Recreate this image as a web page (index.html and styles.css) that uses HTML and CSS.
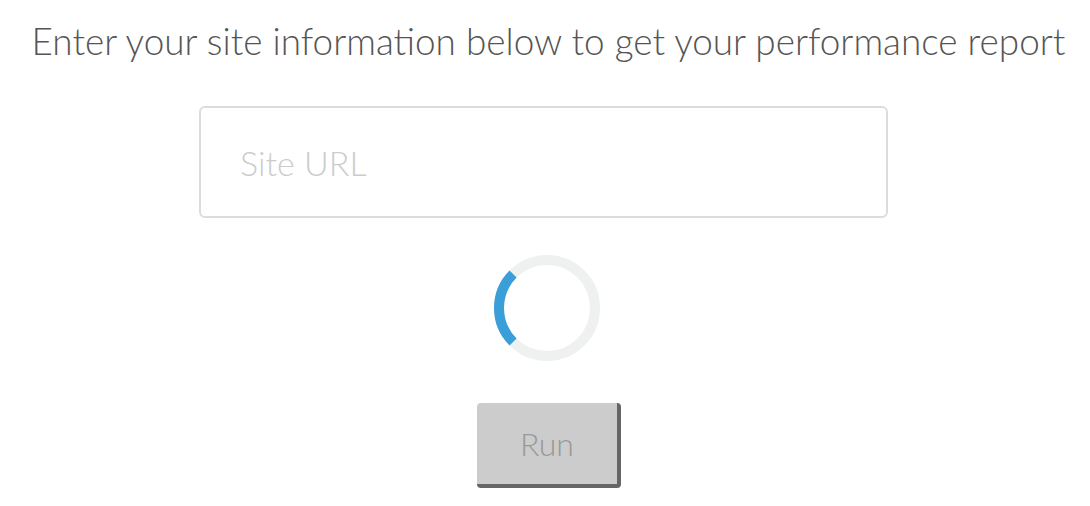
FILE: index.html
```html
<!DOCTYPE html>
<html>
<head>
<meta charset="utf-8">
<link rel="stylesheet" href="styles.css">
</head>
<body>
<main class="page">
  <h1 class="title">Enter your site information below to get your performance report</h1>
  <div class="field">
    <input class="url-input" type="text" placeholder="Site URL">
  </div>
  <div class="spinner">
    <svg width="108" height="108" viewBox="0 0 108 108">
      <circle cx="54" cy="54" r="48" fill="none" stroke="#eff0f0" stroke-width="10"/>
      <path d="M20.06 20.06 A48 48 0 0 0 20.06 87.94" fill="none" stroke="#3a9fd8" stroke-width="10"/>
    </svg>
  </div>
  <button class="run" type="button">Run</button>
</main>
</body>
</html>
```
FILE: styles.css
```css
html, body {
  margin: 0;
  padding: 0;
  background: #ffffff;
}
.page {
  width: 1090px;
  height: 506px;
  display: flex;
  flex-direction: column;
  align-items: center;
  font-family: Lato, "Open Sans", sans-serif;
}
.title {
  margin: 18px 0 0 0;
  padding-left: 7px;
  font-weight: 300;
  font-size: 36.9px;
  line-height: 46px;
  color: #555555;
  white-space: nowrap;
}
.field {
  margin-top: 42px;
  margin-right: 3px;
}
.url-input {
  box-sizing: border-box;
  width: 689px;
  height: 112px;
  border: 2px solid #dcdcdc;
  border-radius: 6px;
  padding: 0 0 0 39px;
  font-family: Lato, "Open Sans", sans-serif;
  font-weight: 300;
  font-size: 34px;
  color: #555;
  outline: none;
  background: #fff;
}
.url-input::placeholder {
  color: #cccccc;
}
.spinner {
  margin-top: 36px;
  margin-left: 4px;
  width: 108px;
  height: 108px;
}
.spinner svg {
  display: block;
}
.run {
  margin-top: 41px;
  margin-left: 8px;
  box-sizing: border-box;
  width: 144px;
  height: 85px;
  background: #cccccc;
  border: none;
  border-right: 4px solid #666666;
  border-bottom: 4px solid #666666;
  border-radius: 4px;
  font-family: Lato, "Open Sans", sans-serif;
  font-weight: 300;
  font-size: 32px;
  color: #999999;
  padding: 0;
}
```
